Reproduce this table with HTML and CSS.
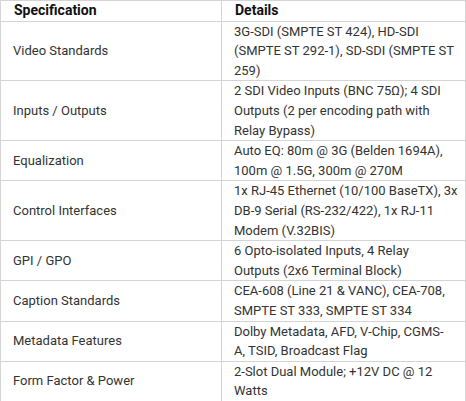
FILE: index.html
```html
<!DOCTYPE html>
<html lang="en">
<head>
    <meta charset="UTF-8">
    <title>Specifications</title>
    <link rel="stylesheet" href="styles.css">
</head>
<body>
    <table class="spec-table">
        <colgroup>
            <col class="col-name">
            <col>
        </colgroup>
        <thead>
            <tr>
                <th>Specification</th>
                <th>Details</th>
            </tr>
        </thead>
        <tbody>
            <tr>
                <td>Video Standards</td>
                <td>3G-SDI (SMPTE ST 424), HD-SDI<br>(SMPTE ST 292-1), SD-SDI (SMPTE ST<br>259)</td>
            </tr>
            <tr>
                <td>Inputs / Outputs</td>
                <td>2 SDI Video Inputs (BNC 75Ω); 4 SDI<br>Outputs (2 per encoding path with<br>Relay Bypass)</td>
            </tr>
            <tr>
                <td>Equalization</td>
                <td>Auto EQ: 80m @ 3G (Belden 1694A),<br>100m @ 1.5G, 300m @ 270M</td>
            </tr>
            <tr>
                <td>Control Interfaces</td>
                <td>1x RJ-45 Ethernet (10/100 BaseTX), 3x<br>DB-9 Serial (RS-232/422), 1x RJ-11<br>Modem (V.32BIS)</td>
            </tr>
            <tr>
                <td>GPI / GPO</td>
                <td>6 Opto-isolated Inputs, 4 Relay<br>Outputs (2x6 Terminal Block)</td>
            </tr>
            <tr>
                <td>Caption Standards</td>
                <td>CEA-608 (Line 21 &amp; VANC), CEA-708,<br>SMPTE ST 333, SMPTE ST 334</td>
            </tr>
            <tr>
                <td>Metadata Features</td>
                <td>Dolby Metadata, AFD, V-Chip, CGMS-<br>A, TSID, Broadcast Flag</td>
            </tr>
            <tr>
                <td>Form Factor &amp; Power</td>
                <td>2-Slot Dual Module; +12V DC @ 12<br>Watts</td>
            </tr>
        </tbody>
    </table>
</body>
</html>
```

FILE: styles.css
```css
body {
    margin: 0;
    background-color: #ffffff;
    font-family: Roboto, "Liberation Sans", sans-serif;
    font-size: 13px;
    color: #333;
}
.spec-table {
    width: 466px;
    border-collapse: collapse;
    table-layout: fixed;
}
.spec-table .col-name {
    width: 221px;
}
.spec-table th,
.spec-table td {
    border: 1px solid #d4d4d4;
    padding: 0 0 0 12px;
    line-height: 19.6px;
    text-align: left;
    vertical-align: middle;
    white-space: nowrap;
}
.spec-table th {
    font-size: 14px;
    font-weight: bold;
    color: #111;
    padding-left: 13px;
}
```
